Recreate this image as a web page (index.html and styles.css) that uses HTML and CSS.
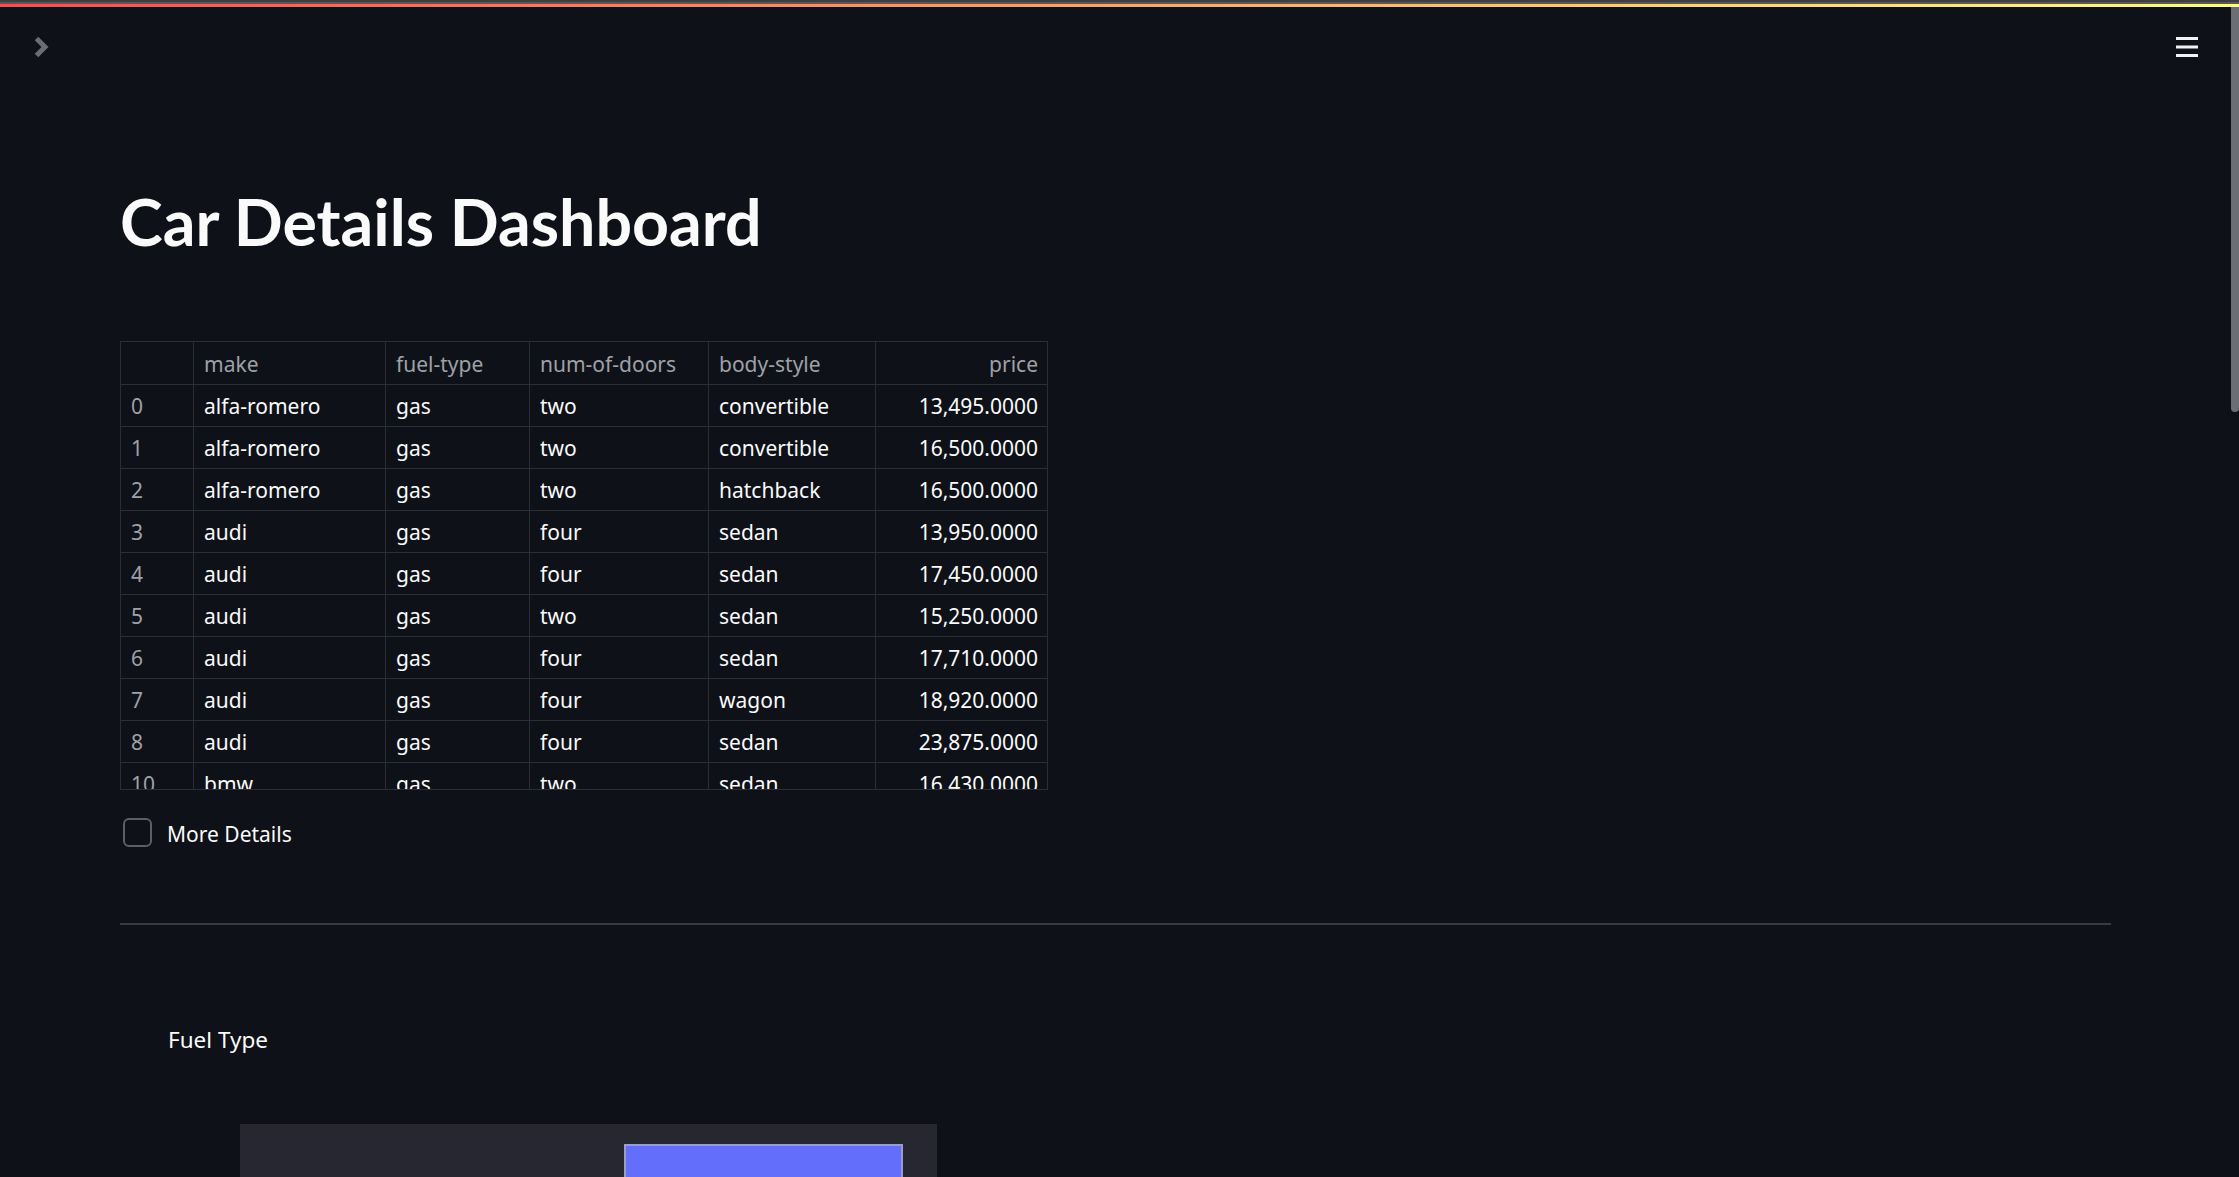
FILE: index.html
```html
<!DOCTYPE html>
<html lang="en">
<head>
<meta charset="utf-8">
<title>Car Details Dashboard</title>
<link rel="stylesheet" href="styles.css">
</head>
<body>
<div class="app">
  <div class="chrome-strip"></div>
  <div class="decoration"></div>
  <header class="header">
    <span class="sidebar-toggle">
      <svg width="16" height="22" viewBox="0 0 16 22"><polyline points="2.5,2.5 11,11 2.5,19.5"/></svg>
    </span>
    <span class="menu-btn">
      <svg width="22" height="20" viewBox="0 0 22 20"><rect x="0" y="0" width="22" height="3"/><rect x="0" y="8.5" width="22" height="3"/><rect x="0" y="17" width="22" height="3"/></svg>
    </span>
  </header>
  <main class="main">
    <h1 class="title">Car Details Dashboard</h1>
    <div class="dataframe">
      <div class="df-row df-head"><div class="cell"></div><div class="cell">make</div><div class="cell">fuel-type</div><div class="cell">num-of-doors</div><div class="cell">body-style</div><div class="cell num">price</div></div>
      <div class="df-row"><div class="cell idx">0</div><div class="cell">alfa-romero</div><div class="cell">gas</div><div class="cell">two</div><div class="cell">convertible</div><div class="cell num">13,495.0000</div></div>
      <div class="df-row"><div class="cell idx">1</div><div class="cell">alfa-romero</div><div class="cell">gas</div><div class="cell">two</div><div class="cell">convertible</div><div class="cell num">16,500.0000</div></div>
      <div class="df-row"><div class="cell idx">2</div><div class="cell">alfa-romero</div><div class="cell">gas</div><div class="cell">two</div><div class="cell">hatchback</div><div class="cell num">16,500.0000</div></div>
      <div class="df-row"><div class="cell idx">3</div><div class="cell">audi</div><div class="cell">gas</div><div class="cell">four</div><div class="cell">sedan</div><div class="cell num">13,950.0000</div></div>
      <div class="df-row"><div class="cell idx">4</div><div class="cell">audi</div><div class="cell">gas</div><div class="cell">four</div><div class="cell">sedan</div><div class="cell num">17,450.0000</div></div>
      <div class="df-row"><div class="cell idx">5</div><div class="cell">audi</div><div class="cell">gas</div><div class="cell">two</div><div class="cell">sedan</div><div class="cell num">15,250.0000</div></div>
      <div class="df-row"><div class="cell idx">6</div><div class="cell">audi</div><div class="cell">gas</div><div class="cell">four</div><div class="cell">sedan</div><div class="cell num">17,710.0000</div></div>
      <div class="df-row"><div class="cell idx">7</div><div class="cell">audi</div><div class="cell">gas</div><div class="cell">four</div><div class="cell">wagon</div><div class="cell num">18,920.0000</div></div>
      <div class="df-row"><div class="cell idx">8</div><div class="cell">audi</div><div class="cell">gas</div><div class="cell">four</div><div class="cell">sedan</div><div class="cell num">23,875.0000</div></div>
      <div class="df-row"><div class="cell idx">10</div><div class="cell">bmw</div><div class="cell">gas</div><div class="cell">two</div><div class="cell">sedan</div><div class="cell num">16,430.0000</div></div>
    </div>
    <label class="checkbox"><span class="box"></span><span class="check-label">More Details</span></label>
    <hr class="divider">
    <section class="chart">
      <div class="chart-title">Fuel Type</div>
      <div class="plot"><div class="bar"></div></div>
    </section>
  </main>
  <div class="scroll-thumb"></div>
</div>
</body>
</html>
```
FILE: styles.css
```css
html, body {
  margin: 0;
  padding: 0;
  background: #0e1117;
}
.app {
  position: relative;
  height: 100vh;
  overflow: hidden;
  background: #0e1117;
  color: #fafafa;
  font-family: "Noto Sans", sans-serif;
}
.chrome-strip {
  height: 4px;
  background: linear-gradient(to bottom, #3e3e40 0, #3e3e40 2px, #58585a 2px, #58585a 4px);
}
.decoration {
  height: 3px;
  background: linear-gradient(90deg, #ff4b4b, #fffd80);
}
.header {
  height: 80px;
  display: flex;
  align-items: center;
  justify-content: space-between;
  padding: 0 41px 0 34px;
}
.sidebar-toggle svg {
  display: block;
  fill: none;
  stroke: #6b6d75;
  stroke-width: 5;
  stroke-linejoin: miter;
  stroke-linecap: butt;
}
.menu-btn svg {
  display: block;
  fill: #f2f2f4;
}
.main {
  padding: 97px 128px 0 120px;
}
.title {
  margin: 0;
  font-family: "Lato", sans-serif;
  font-weight: 700;
  font-size: 64.5px;
  line-height: 74px;
  color: #fafafa;
}
.dataframe {
  margin-top: 83px;
  width: 928px;
  height: 449px;
  box-sizing: border-box;
  border: 1px solid #2c2e35;
  overflow: hidden;
  font-size: 21px;
}
.df-row {
  display: grid;
  grid-template-columns: 73px 192px 144px 179px 167px 171px;
  height: 42px;
  box-sizing: border-box;
  border-bottom: 1px solid #2c2e35;
}
.df-head {
  height: 43px;
  color: #9fa1a7;
}
.cell {
  display: flex;
  align-items: center;
  box-sizing: border-box;
  padding: 1px 10px 0 10px;
  border-right: 1px solid #2c2e35;
  white-space: nowrap;
  overflow: hidden;
}
.cell:last-child {
  border-right: none;
}
.cell.num {
  justify-content: flex-end;
  padding-right: 9px;
}
.cell.idx {
  color: #9fa1a7;
}
.checkbox {
  display: flex;
  align-items: center;
  margin-top: 28px;
  margin-left: 3px;
  height: 29px;
}
.box {
  width: 29px;
  height: 29px;
  box-sizing: border-box;
  border: 2px solid #5d5f66;
  border-radius: 6px;
}
.check-label {
  margin-left: 15px;
  font-size: 21px;
  color: #fafafa;
  padding-top: 2px;
}
.divider {
  margin: 76px 0 0 0;
  border: none;
  height: 2px;
  background: #393b41;
}
.chart {
  margin-top: 100px;
}
.chart-title {
  padding-left: 48px;
  font-size: 22.5px;
  line-height: 30px;
  color: #fafafa;
}
.plot {
  margin-top: 69px;
  margin-left: 120px;
  width: 697px;
  height: 400px;
  padding-top: 20px;
  box-sizing: border-box;
  background: #262730;
}
.bar {
  margin-left: 384px;
  width: 279px;
  height: 380px;
  box-sizing: border-box;
  background: #636efa;
  border: 2px solid #9a9dc4;
  border-bottom: none;
}
.scroll-thumb {
  position: absolute;
  top: 7px;
  right: 0;
  width: 8px;
  height: 405px;
  background: #6c6e74;
  border-radius: 0 0 4px 4px;
}
```
